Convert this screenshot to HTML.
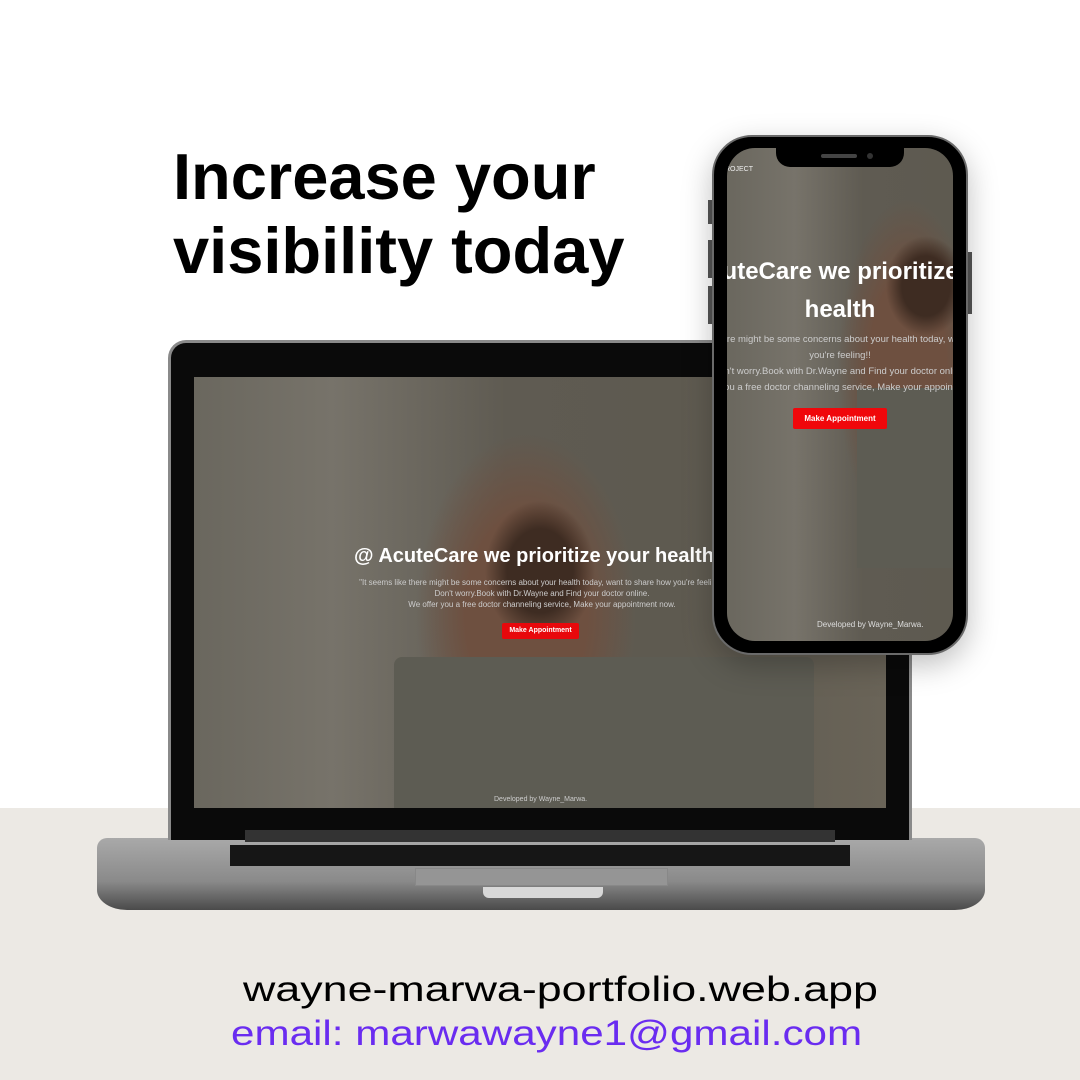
<!DOCTYPE html>
<html><head><meta charset="utf-8"><style>
*{margin:0;padding:0;box-sizing:border-box}
body{width:1080px;height:1080px;position:relative;overflow:hidden;background:#fff;font-family:"Liberation Sans",sans-serif}
.floor{position:absolute;left:0;top:808px;width:1080px;height:272px;background:#ece9e4}
h1{position:absolute;left:173px;top:140px;font-size:65px;line-height:74px;font-weight:700;color:#000}
.abs{position:absolute}
.photo{background:
 radial-gradient(ellipse 55px 70px at 50% 45%, #3e2c22 0 60%, transparent 100%),
 radial-gradient(ellipse 110px 180px at 48% 55%, #6e5040 0 55%, transparent 100%),
 linear-gradient(90deg,#6a675e 0,#77736a 20%,#5f5b52 45%,#5e5a50 70%,#6a6458 100%);}
.t{position:absolute;color:#fff;text-align:center;white-space:nowrap}
</style></head><body>
<div class="floor"></div>
<h1>Increase your<br>visibility today</h1>

<div class="abs" style="left:97px;top:838px;width:888px;height:72px;background:linear-gradient(#a9a9a9,#8a8a8a 60%,#4a4a4a);border-radius:10px 10px 30px 30px/10px 10px 20px 20px"></div>
<div class="abs" style="left:230px;top:845px;width:620px;height:21px;background:#161616"></div>
<div class="abs" style="left:415px;top:868px;width:253px;height:18px;background:#959595;border:1px solid #888"></div>
<div class="abs" style="left:483px;top:887px;width:120px;height:11px;background:#d8d8d8;border-radius:0 0 6px 6px"></div>
<div class="abs" style="left:168px;top:340px;width:744px;height:500px;background:#0a0a0a;border:3px solid #8a8a8a;border-bottom:none;border-radius:18px 18px 0 0"></div>
<div class="abs" style="left:245px;top:830px;width:590px;height:12px;background:#333"></div>
<div class="abs photo" style="left:194px;top:377px;width:692px;height:431px;overflow:hidden">
 <div class="abs" style="left:200px;top:280px;width:420px;height:160px;background:#5d5c53;border-radius:8px 8px 0 0"></div>
 <div class="t" style="left:160px;top:168px;font-size:20px;font-weight:700">@ AcuteCare we prioritize your health</div>
 <div class="t" style="left:148px;top:200px;font-size:8px;color:#ccc;line-height:11px;width:400px">"It seems like there might be some concerns about your health today, want to share how you're feeling!!<br>Don't worry.Book with Dr.Wayne and Find your doctor online.<br>We offer you a free doctor channeling service, Make your appointment now.</div>
 <div class="abs" style="left:308px;top:246px;width:77px;height:16px;background:#e8080c;border-radius:2px;color:#fff;font-size:7px;text-align:center;line-height:16px;font-weight:700">Make Appointment</div>
 <div class="t" style="left:300px;top:419px;font-size:7px;color:#ccc">Developed by Wayne_Marwa.</div>
</div>

<div class="abs" style="left:708px;top:200px;width:4px;height:24px;background:#555"></div>
<div class="abs" style="left:708px;top:240px;width:4px;height:38px;background:#555"></div>
<div class="abs" style="left:708px;top:286px;width:4px;height:38px;background:#555"></div>
<div class="abs" style="left:967px;top:252px;width:5px;height:62px;background:#555"></div>
<div class="abs" style="left:712px;top:135px;width:256px;height:520px;background:#000;border:2px solid #6a6a6a;border-radius:40px;box-shadow:0 10px 30px rgba(0,0,0,.25)"></div>
<div class="abs" style="left:727px;top:148px;width:226px;height:493px;border-radius:28px;overflow:hidden;background:
 radial-gradient(ellipse 40px 50px at 88% 28%, #3e2c22 0 60%, transparent 100%),
 radial-gradient(ellipse 70px 170px at 80% 45%, #6e5040 0 55%, transparent 100%),
 linear-gradient(90deg,#6a675e,#77736a 30%,#5f5b52 60%,#5e5a50)">
 <div class="abs" style="left:130px;top:240px;width:100px;height:180px;background:#5d5c53"></div>
 <div class="t" style="left:-2px;top:18px;font-size:7px;color:#eee">ROJECT</div>
 <div class="t" style="left:-187px;top:105px;font-size:24px;font-weight:700;line-height:38px;width:600px">@ AcuteCare we prioritize your<br>health</div>
 <div class="t" style="left:-187px;top:184px;font-size:9.5px;color:#ccc;line-height:16px;width:600px">"It seems like there might be some concerns about your health today, want to share how<br>you're feeling!!<br>Don't worry.Book with Dr.Wayne and Find your doctor online.<br>We offer you a free doctor channeling service, Make your appointment now.</div>
 <div class="abs" style="left:66px;top:260px;width:94px;height:21px;background:#f0070b;border-radius:2px;color:#fff;font-size:8px;text-align:center;line-height:21px;font-weight:700">Make Appointment</div>
 <div class="t" style="left:90px;top:472px;font-size:8px;color:#ddd">Developed by Wayne_Marwa.</div>
</div>
<div class="abs" style="left:776px;top:146px;width:128px;height:21px;background:#000;border-radius:0 0 14px 14px"></div>
<div class="abs" style="left:821px;top:154px;width:36px;height:4px;background:#444;border-radius:2px"></div>
<div class="abs" style="left:867px;top:153px;width:6px;height:6px;background:#333;border-radius:50%"></div>

<div class="t" style="left:243px;top:970px;font-size:35px;color:#000;transform-origin:0 0;transform:scaleX(1.28)">wayne-marwa-portfolio.web.app</div>
<div class="t" style="left:231px;top:1014px;font-size:35px;color:#6a2cf0;transform-origin:0 0;transform:scaleX(1.205)">email: marwawayne1@gmail.com</div>
</body></html>
